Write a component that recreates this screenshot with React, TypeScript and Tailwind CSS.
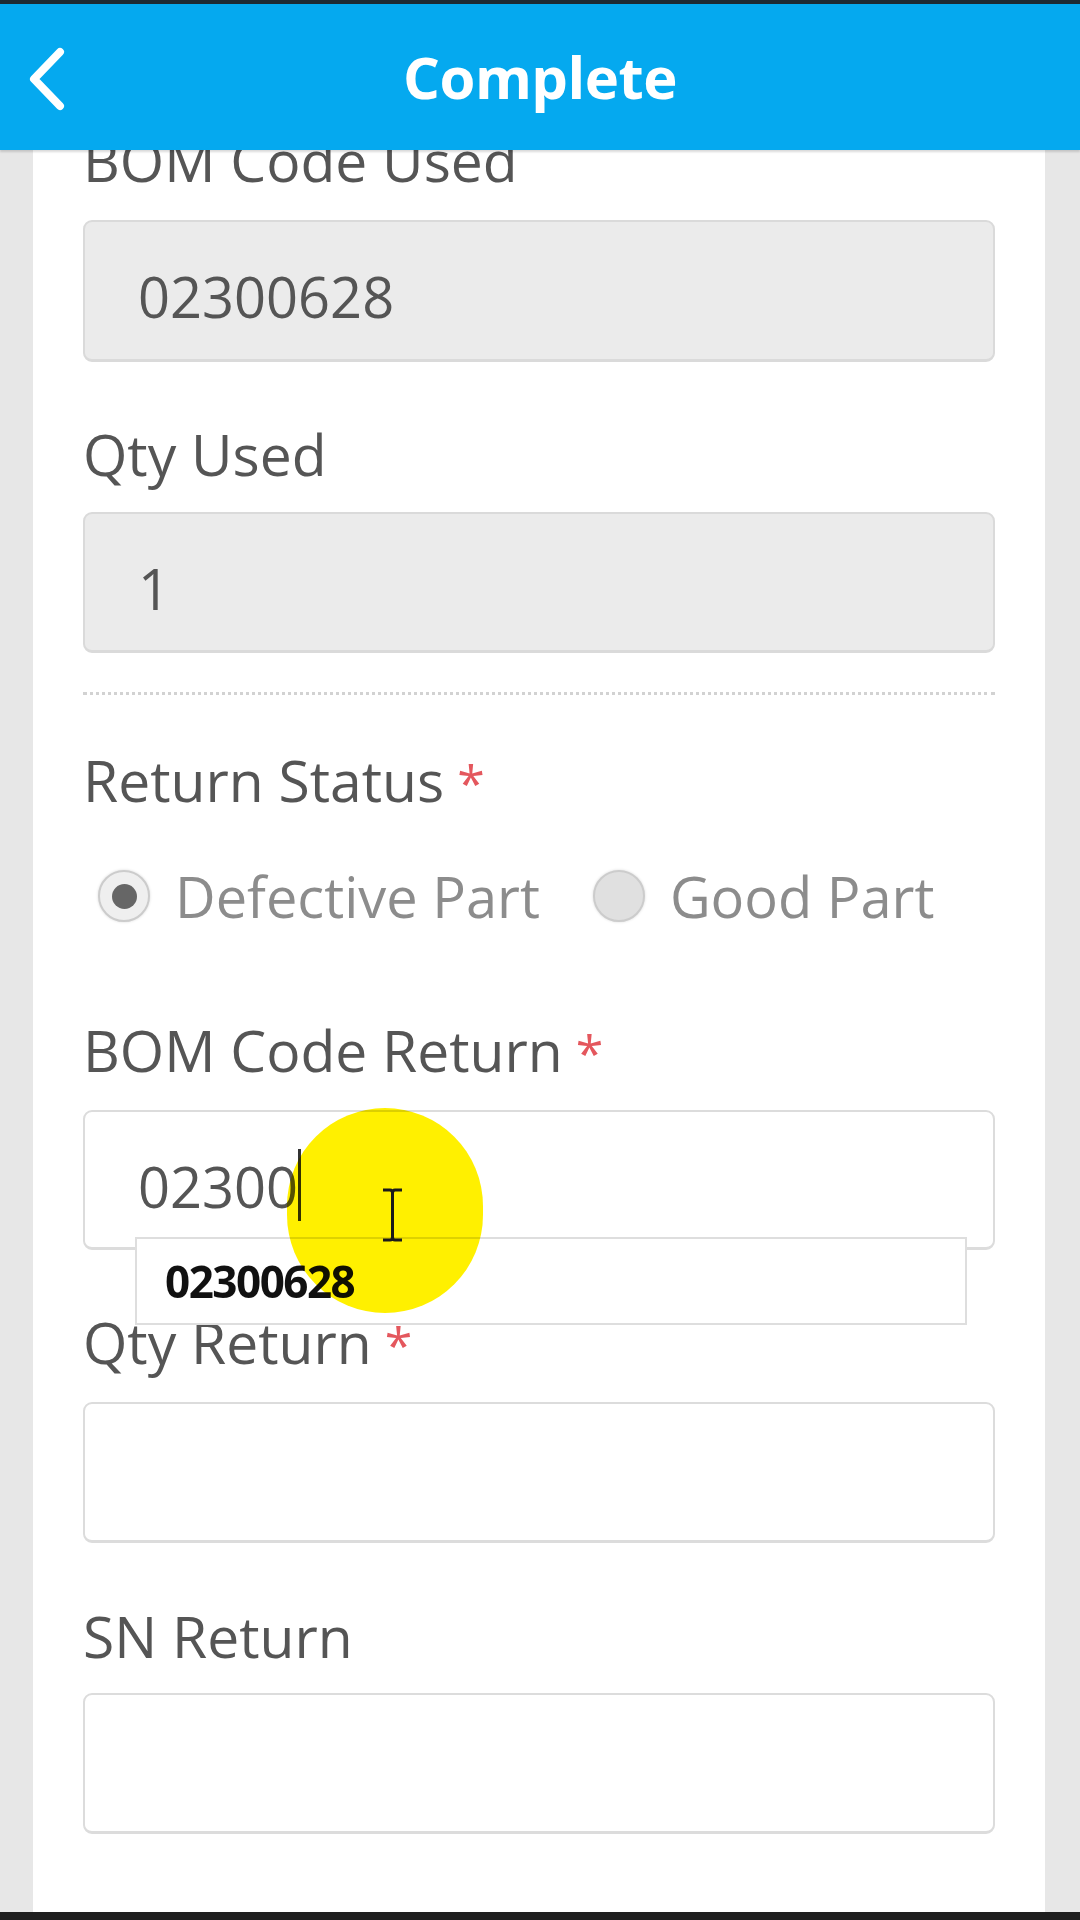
import React from "react";

const font = { fontFamily: '"Open Sans", "Noto Sans", sans-serif' };

function Label({ text, required, className }: { text: string; required?: boolean; className: string }) {
  return (
    <div className={`h-[57px] text-[57px] leading-[57px] text-[#555] whitespace-nowrap ${className}`}>
      {text}
      {required && <span className="text-[#e4575d] text-[50px]"> *</span>}
    </div>
  );
}

function Field({ value, disabled, className }: { value?: string; disabled?: boolean; className: string }) {
  return (
    <div
      className={`rounded-[9px] border-2 border-b-[3px] ${
        disabled ? "bg-[#ebebeb] border-[#dadada]" : "bg-white border-[#dcdcdc]"
      } pl-[53px] pt-[46px] text-[56px] leading-[56px] text-[#555] ${className}`}
    >
      {value}
    </div>
  );
}

function Radio({ checked, label }: { checked?: boolean; label: string }) {
  return (
    <div className="flex items-center">
      <div
        className={`w-[52px] h-[52px] rounded-full border-2 border-[#cccccc] shadow-[0_0_3px_rgba(0,0,0,0.15)] flex items-center justify-center ${
          checked ? "bg-[#efefef]" : "bg-[#e0e0e0]"
        }`}
      >
        {checked && <div className="w-[25px] h-[25px] rounded-full bg-[#666]" />}
      </div>
      <span className="ml-[25px] text-[56px] leading-[52px] text-[#8c8c8c] whitespace-nowrap">{label}</span>
    </div>
  );
}

export default function App() {
  return (
    <div className="w-[1080px] h-[1920px] bg-[#e7e7e7] flex flex-col overflow-hidden" style={font}>
      <div className="h-[4px] bg-[#1d2a33] shrink-0" />
      <div className="relative z-10 h-[146px] shrink-0 bg-[#05a9ef] flex items-center justify-center shadow-[0_2px_2px_rgba(0,0,0,0.15)]">
        <svg className="absolute left-[26px] top-[40px]" width="46" height="70" viewBox="0 0 46 70">
          <path d="M34 8 L8 35 L34 62" fill="none" stroke="white" strokeWidth="8" strokeLinecap="round" strokeLinejoin="round" />
        </svg>
        <span className="text-white font-bold text-[58px] leading-[58px] tracking-[-0.5px]">Complete</span>
      </div>
      <div className="flex-1 flex min-h-0">
        <div className="ml-[33px] w-[1012px] bg-white flex flex-col px-[50px]">
          <Label text="BOM Code Used" className="mt-[-18px]" />
          <Field value="02300628" disabled className="mt-[31px] h-[142px]" />

          <Label text="Qty Used" className="mt-[64px]" />
          <Field value="1" disabled className="mt-[29px] h-[141px]" />

          <div className="mt-[39px] border-t-[3px] border-dotted border-[#d2d2d2]" />

          <Label text="Return Status" required className="mt-[57px]" />
          <div className="mt-[61px] h-[52px] pl-[15px] flex items-center gap-[53px]">
            <Radio checked label="Defective Part" />
            <Radio label="Good Part" />
          </div>

          <Label text="BOM Code Return" required className="mt-[100px]" />
          <div className="relative mt-[31px] h-[140px]">
            <div className="h-[140px] rounded-[9px] border-2 border-b-[3px] border-[#dcdcdc] bg-white pl-[53px] pt-[46px] text-[56px] leading-[56px] text-[#555] flex items-start">
              <span>02300</span>
              <span className="inline-block w-[3px] h-[72px] bg-[#333] mt-[-9px]" />
            </div>
            <div className="absolute z-20 left-[52px] top-[127px] w-[832px] h-[88px] bg-white border-2 border-[#dedede] flex items-center pl-[28px]">
              <span className="font-bold text-[44px] leading-[44px] text-[#111] tracking-[-1.5px]" style={{ fontFamily: '"Open Sans", sans-serif' }}>
                02300628
              </span>
            </div>
            <div className="absolute z-30 left-[204px] top-[-2px] w-[196px] h-[205px] rounded-full bg-[#fff000] mix-blend-multiply" />
            <svg className="absolute z-40 left-[297px] top-[77px]" width="25" height="56" viewBox="0 0 25 56">
              <path d="M3 3 H10 Q12.5 3 12.5 6 V50 Q12.5 53 10 53 H3 M22 3 H15 Q12.5 3 12.5 6 M12.5 50 Q12.5 53 15 53 H22" fill="none" stroke="#1a1a1a" strokeWidth="3" />
            </svg>
          </div>

          <Label text="Qty Return" required className="mt-[64px]" />
          <Field className="mt-[31px] h-[141px]" />

          <Label text="SN Return" className="mt-[65px]" />
          <Field className="mt-[28px] h-[141px]" />
        </div>
      </div>
      <div className="h-[8px] bg-[#1f1f1f] shrink-0" />
    </div>
  );
}
